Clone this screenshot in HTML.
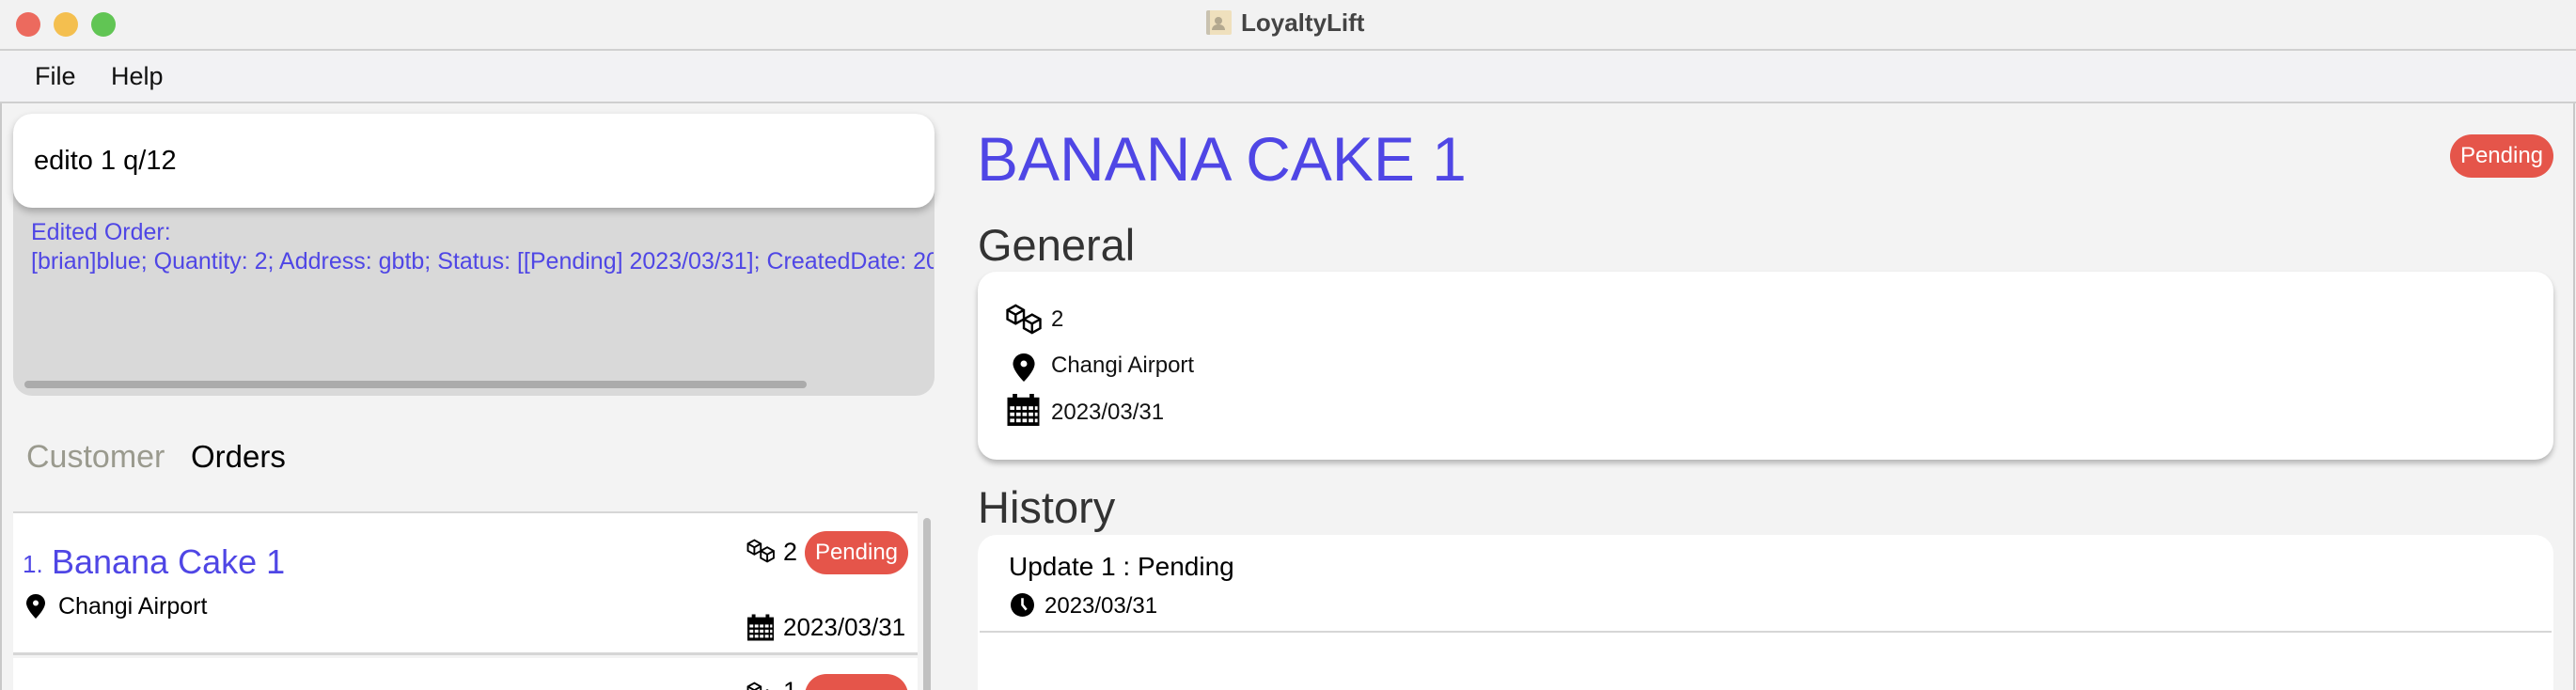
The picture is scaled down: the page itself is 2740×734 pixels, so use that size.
<!DOCTYPE html>
<html><head><meta charset="utf-8"><style>
*{margin:0;padding:0;box-sizing:border-box}
html,body{width:2740px;height:734px;overflow:hidden}
body{background:#f3f3f3;font-family:"Liberation Sans",sans-serif;position:relative}
.a{position:absolute}
.t{white-space:nowrap}
.blue{color:#4f46e5}
.badge{background:#e5554a;color:#fff;border-radius:24px;text-align:center}
</style></head><body>
<div class="a" style="left:0;top:0;width:2740px;height:54px;background:#f2f2f2;border-bottom:2px solid #d0d0d0"></div>
<div class="a" style="left:17px;top:13px;width:26px;height:26px;border-radius:50%;background:#ec6a5e"></div>
<div class="a" style="left:57px;top:13px;width:26px;height:26px;border-radius:50%;background:#f4bf4f"></div>
<div class="a" style="left:97px;top:13px;width:26px;height:26px;border-radius:50%;background:#61c554"></div>
<div class="a" style="left:1283px;top:11px;width:27px;height:26px;background:#efe0bd;border-left:4px solid #c9c2b0;border-radius:2px"></div>
<div class="a" style="left:1292px;top:18px;width:8px;height:8px;border-radius:50%;background:#b3a88f"></div>
<div class="a" style="left:1289px;top:26px;width:14px;height:6px;border-radius:6px 6px 0 0;background:#b3a88f"></div>
<div class="a t" style="left:1320px;top:9px;font-size:26px;font-weight:bold;color:#444">LoyaltyLift</div>
<div class="a" style="left:0;top:55px;width:2740px;height:55px;background:#f2f2f4;border-bottom:2px solid #cfcfcf"></div>
<div class="a t" style="left:37px;top:66px;font-size:27px;color:#111">File</div>
<div class="a t" style="left:118px;top:66px;font-size:27px;color:#111">Help</div>
<div class="a" style="left:0;top:110px;width:2px;height:624px;background:#c8c8c8"></div>
<div class="a" style="left:2737px;top:110px;width:2px;height:624px;background:#c8c8c8"></div>
<div class="a" style="left:14px;top:121px;width:980px;height:300px;background:#d9d9d9;border-radius:20px"></div>
<div class="a" style="left:14px;top:121px;width:980px;height:100px;background:#fff;border-radius:20px;box-shadow:0 4px 8px rgba(0,0,0,.25)"></div>
<div class="a t" style="left:36px;top:155px;font-size:29px;color:#000">edito 1 q/12</div>
<div class="a t blue" style="left:33px;top:232px;font-size:25px;line-height:31px;width:960px;overflow:hidden">Edited Order:<br>[brian]blue; Quantity: 2; Address: gbtb; Status: [[Pending] 2023/03/31]; CreatedDate: 2023/03/31</div>
<div class="a" style="left:26px;top:405px;width:832px;height:8px;background:#ababab;border-radius:4px"></div>
<div class="a t" style="left:28px;top:467px;font-size:34px;color:#9a9a8e">Customer</div>
<div class="a t" style="left:203px;top:467px;font-size:33px;color:#000">Orders</div>
<div class="a" style="left:14px;top:544px;width:962px;height:153px;background:#fff;border-top:2px solid #d6d6d6;border-bottom:3px solid #d6d6d6"></div>
<div class="a t blue" style="left:24px;top:585px;font-size:26px">1.</div>
<div class="a t blue" style="left:55px;top:577px;font-size:36px">Banana Cake 1</div>
<svg class="a" style="left:28px;top:632px" width="20" height="26" viewBox="0 0 20 26"><path d="M10 0C4.5 0 0 4.3 0 9.6 0 16 10 26 10 26S20 16 20 9.6C20 4.3 15.5 0 10 0z" fill="#000"/><circle cx="10" cy="9.5" r="3" fill="#fff"/></svg>
<div class="a t" style="left:62px;top:631px;font-size:25px;color:#000">Changi Airport</div>
<svg class="a" style="left:794px;top:572px" width="32" height="28" viewBox="0 0 42 34"><g fill="none" stroke="#000" stroke-width="2.5"><path d="M2 7l9-5 9 5v10l-9 5-9-5z M2 7l9 5 9-5 M11 12v10"/><path d="M20 17l9-5 9 5v10l-9 5-9-5z M20 17l9 5 9-5 M29 22v10"/></g></svg>
<div class="a t" style="left:833px;top:572px;font-size:27px">2</div>
<div class="a badge t" style="left:856px;top:565px;width:110px;height:46px;line-height:46px;font-size:24px">Pending</div>
<svg class="a" style="left:795px;top:652px" width="28" height="31" viewBox="0 0 36 36"><rect x="0" y="4" width="36" height="32" fill="#000"/><rect x="6" y="0" width="5" height="8" fill="#000"/><rect x="25" y="0" width="5" height="8" fill="#000"/><g fill="#fff"><rect x="3" y="14" width="5" height="4"/><rect x="10" y="14" width="5" height="4"/><rect x="17" y="14" width="5" height="4"/><rect x="24" y="14" width="5" height="4"/><rect x="3" y="21" width="5" height="4"/><rect x="10" y="21" width="5" height="4"/><rect x="17" y="21" width="5" height="4"/><rect x="24" y="21" width="5" height="4"/><rect x="3" y="28" width="5" height="4"/><rect x="10" y="28" width="5" height="4"/><rect x="17" y="28" width="5" height="4"/><rect x="24" y="28" width="5" height="4"/><rect x="31" y="14" width="3" height="4"/><rect x="31" y="21" width="3" height="4"/><rect x="31" y="28" width="3" height="4"/></g></svg>
<div class="a t" style="left:833px;top:652px;font-size:26px">2023/03/31</div>
<div class="a" style="left:14px;top:700px;width:962px;height:40px;background:#fff"></div>
<svg class="a" style="left:794px;top:724px" width="32" height="28" viewBox="0 0 42 34"><g fill="none" stroke="#000" stroke-width="2.5"><path d="M2 7l9-5 9 5v10l-9 5-9-5z M2 7l9 5 9-5 M11 12v10"/><path d="M20 17l9-5 9 5v10l-9 5-9-5z"/></g></svg>
<div class="a t" style="left:833px;top:720px;font-size:27px">1</div>
<div class="a badge" style="left:856px;top:717px;width:110px;height:46px"></div>
<div class="a" style="left:982px;top:551px;width:8px;height:200px;background:#c0c0c0;border-radius:4px"></div>
<div class="a t blue" style="left:1039px;top:131px;font-size:66px">BANANA CAKE 1</div>
<div class="a badge t" style="left:2606px;top:143px;width:110px;height:46px;line-height:46px;font-size:24px">Pending</div>
<div class="a t" style="left:1040px;top:233px;font-size:47px;color:#333">General</div>
<div class="a" style="left:1040px;top:289px;width:1676px;height:200px;background:#fff;border-radius:20px;box-shadow:0 4px 6px rgba(0,0,0,.25)"></div>
<svg class="a" style="left:1069px;top:323px" width="42" height="33" viewBox="0 0 42 34"><g fill="none" stroke="#000" stroke-width="2.5"><path d="M2 7l9-5 9 5v10l-9 5-9-5z M2 7l9 5 9-5 M11 12v10"/><path d="M20 17l9-5 9 5v10l-9 5-9-5z M20 17l9 5 9-5 M29 22v10"/></g></svg>
<div class="a t" style="left:1118px;top:326px;font-size:24px;color:#111">2</div>
<svg class="a" style="left:1077px;top:376px" width="24" height="30" viewBox="0 0 20 26"><path d="M10 0C4.5 0 0 4.3 0 9.6 0 16 10 26 10 26S20 16 20 9.6C20 4.3 15.5 0 10 0z" fill="#000"/><circle cx="10" cy="9.5" r="3" fill="#fff"/></svg>
<div class="a t" style="left:1118px;top:375px;font-size:24px;color:#111">Changi Airport</div>
<svg class="a" style="left:1070px;top:419px" width="37" height="34" viewBox="0 0 36 36"><rect x="0" y="4" width="36" height="32" fill="#000"/><rect x="6" y="0" width="5" height="8" fill="#000"/><rect x="25" y="0" width="5" height="8" fill="#000"/><g fill="#fff"><rect x="3" y="14" width="5" height="4"/><rect x="10" y="14" width="5" height="4"/><rect x="17" y="14" width="5" height="4"/><rect x="24" y="14" width="5" height="4"/><rect x="3" y="21" width="5" height="4"/><rect x="10" y="21" width="5" height="4"/><rect x="17" y="21" width="5" height="4"/><rect x="24" y="21" width="5" height="4"/><rect x="3" y="28" width="5" height="4"/><rect x="10" y="28" width="5" height="4"/><rect x="17" y="28" width="5" height="4"/><rect x="24" y="28" width="5" height="4"/><rect x="31" y="14" width="3" height="4"/><rect x="31" y="21" width="3" height="4"/><rect x="31" y="28" width="3" height="4"/></g></svg>
<div class="a t" style="left:1118px;top:425px;font-size:24px;color:#111">2023/03/31</div>
<div class="a t" style="left:1040px;top:512px;font-size:47px;color:#333">History</div>
<div class="a" style="left:1040px;top:569px;width:1676px;height:200px;background:#fff;border-radius:20px"></div>
<div class="a t" style="left:1073px;top:587px;font-size:28px;color:#000">Update 1 : Pending</div>
<svg class="a" style="left:1075px;top:631px" width="25" height="25" viewBox="0 0 24 24"><circle cx="12" cy="12" r="12" fill="#000"/><path d="M12 5v7l4 5" stroke="#fff" stroke-width="2.5" fill="none"/></svg>
<div class="a t" style="left:1111px;top:631px;font-size:24px;color:#000">2023/03/31</div>
<div class="a" style="left:1042px;top:671px;width:1672px;height:2px;background:#d6d6d6"></div>
</body></html>
